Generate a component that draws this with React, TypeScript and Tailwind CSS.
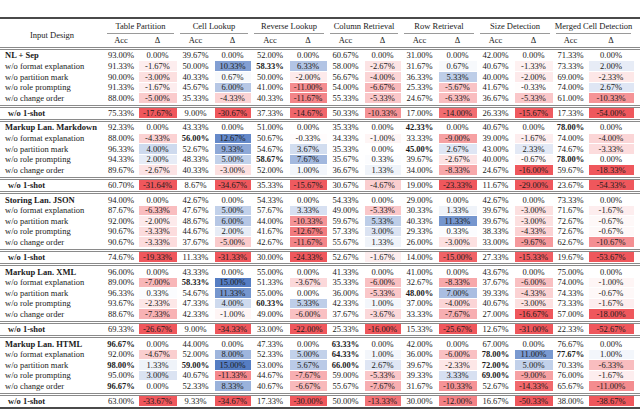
import React from "react";

const WC = [
  "w-[34px]", "w-[39px]", "w-[37px]", "w-[37px]", "w-[38px]", "w-[38px]", "w-[37px]",
  "w-[37px]", "w-[37px]", "w-[39px]", "w-[37px]", "w-[39px]", "w-[35px]", "w-[46px]",
];
const GW = ["w-[73px]", "w-[74px]", "w-[76px]", "w-[74px]", "w-[76px]", "w-[76px]", "w-[81px]"];
const GN = [
  "Table Partition", "Cell Lookup", "Reverse Lookup", "Column Retrieval",
  "Row Retrieval", "Size Detection", "Merged Cell Detection",
];

type Group = { name: string; rows: string[][] };

const SUB = [
  "w/o format explanation",
  "w/o partition mark",
  "w/o role prompting",
  "w/o change order",
];

const groups: Group[] = [
  {
    name: "NL + Sep",
    rows: [
      ["93.00", "0.00", "39.67", "0.00", "52.00", "0.00", "60.67", "0.00", "31.00", "0.00", "42.00", "0.00", "71.33", "0.00"],
      ["91.33", "-1.67", "50.00", "10.33", "*58.33", "6.33", "58.00", "-2.67", "31.67", "0.67", "40.67", "-1.33", "73.33", "2.00"],
      ["90.00", "-3.00", "40.33", "0.67", "50.00", "-2.00", "56.67", "-4.00", "36.33", "5.33", "40.00", "-2.00", "69.00", "-2.33"],
      ["91.33", "-1.67", "45.67", "6.00", "41.00", "-11.00", "54.00", "-6.67", "25.33", "-5.67", "41.67", "-0.33", "74.00", "2.67"],
      ["88.00", "-5.00", "35.33", "-4.33", "40.33", "-11.67", "55.33", "-5.33", "24.67", "-6.33", "36.67", "-5.33", "61.00", "-10.33"],
      ["75.33", "-17.67", "9.00", "-30.67", "37.33", "-14.67", "50.33", "-10.33", "17.00", "-14.00", "26.33", "-15.67", "17.33", "-54.00"],
    ],
  },
  {
    name: "Markup Lan. Markdown",
    rows: [
      ["92.33", "0.00", "43.33", "0.00", "51.00", "0.00", "35.33", "0.00", "*42.33", "0.00", "40.67", "0.00", "*78.00", "0.00"],
      ["88.00", "-4.33", "*56.00", "12.67", "50.67", "-0.33", "34.33", "-1.00", "33.33", "-9.00", "39.00", "-1.67", "74.00", "-4.00"],
      ["96.33", "4.00", "52.67", "9.33", "54.67", "3.67", "35.33", "0.00", "*45.00", "2.67", "43.00", "2.33", "74.67", "-3.33"],
      ["94.33", "2.00", "48.33", "5.00", "*58.67", "7.67", "35.67", "0.33", "39.67", "-2.67", "40.00", "-0.67", "*78.00", "0.00"],
      ["89.67", "-2.67", "40.33", "-3.00", "52.00", "1.00", "36.67", "1.33", "34.00", "-8.33", "24.67", "-16.00", "59.67", "-18.33"],
      ["60.70", "-31.64", "8.67", "-34.67", "35.33", "-15.67", "30.67", "-4.67", "19.00", "-23.33", "11.67", "-29.00", "23.67", "-54.33"],
    ],
  },
  {
    name: "Storing Lan. JSON",
    rows: [
      ["94.00", "0.00", "42.67", "0.00", "54.33", "0.00", "54.33", "0.00", "29.00", "0.00", "42.67", "0.00", "73.33", "0.00"],
      ["87.67", "-6.33", "47.67", "5.00", "57.67", "3.33", "49.00", "-5.33", "30.33", "1.33", "39.67", "-3.00", "71.67", "-1.67"],
      ["92.00", "-2.00", "48.67", "6.00", "44.00", "-10.33", "59.67", "5.33", "40.33", "11.33", "39.67", "-3.00", "72.67", "-0.67"],
      ["90.67", "-3.33", "44.67", "2.00", "41.67", "-12.67", "57.33", "3.00", "29.33", "0.33", "38.33", "-4.33", "72.67", "-0.67"],
      ["90.67", "-3.33", "37.67", "-5.00", "42.67", "-11.67", "55.67", "1.33", "26.00", "-3.00", "33.00", "-9.67", "62.67", "-10.67"],
      ["74.67", "-19.33", "11.33", "-31.33", "30.00", "-24.33", "52.67", "-1.67", "14.00", "-15.00", "27.33", "-15.33", "19.67", "-53.67"],
    ],
  },
  {
    name: "Markup Lan. XML",
    rows: [
      ["96.00", "0.00", "43.33", "0.00", "55.00", "0.00", "41.33", "0.00", "41.00", "0.00", "43.67", "0.00", "75.00", "0.00"],
      ["89.00", "-7.00", "*58.33", "15.00", "51.33", "-3.67", "35.33", "-6.00", "32.67", "-8.33", "37.67", "-6.00", "74.00", "-1.00"],
      ["96.33", "0.33", "54.67", "11.33", "55.00", "0.00", "36.00", "-5.33", "*48.00", "7.00", "39.33", "-4.33", "74.33", "-0.67"],
      ["93.67", "-2.33", "47.33", "4.00", "*60.33", "5.33", "42.33", "1.00", "37.00", "-4.00", "40.67", "-3.00", "73.33", "-1.67"],
      ["88.67", "-7.33", "42.33", "-1.00", "49.00", "-6.00", "37.67", "-3.67", "33.33", "-7.67", "27.00", "-16.67", "57.00", "-18.00"],
      ["69.33", "-26.67", "9.00", "-34.33", "33.00", "-22.00", "25.33", "-16.00", "15.33", "-25.67", "12.67", "-31.00", "22.33", "-52.67"],
    ],
  },
  {
    name: "Markup Lan. HTML",
    rows: [
      ["*96.67", "0.00", "44.00", "0.00", "47.33", "0.00", "*63.33", "0.00", "42.00", "0.00", "67.00", "0.00", "76.67", "0.00"],
      ["92.00", "-4.67", "52.00", "8.00", "52.33", "5.00", "*64.33", "1.00", "36.00", "-6.00", "*78.00", "11.00", "*77.67", "1.00"],
      ["*98.00", "1.33", "*59.00", "15.00", "53.00", "5.67", "*66.00", "2.67", "39.67", "-2.33", "*72.00", "5.00", "70.33", "-6.33"],
      ["95.00", "3.00", "40.67", "-11.33", "44.67", "-7.67", "59.00", "-5.33", "39.33", "3.33", "*69.00", "-9.00", "76.00", "-1.67"],
      ["*96.67", "0.00", "52.33", "8.33", "40.67", "-6.67", "55.67", "-7.67", "31.67", "-10.33", "52.67", "-14.33", "65.67", "-11.00"],
      ["63.00", "-33.67", "9.33", "-34.67", "17.33", "-30.00", "50.00", "-13.33", "30.00", "-12.00", "16.67", "-50.33", "38.00", "-38.67"],
    ],
  },
];

function color(s: string): string {
  const v = parseFloat(s);
  if (v === 0) return "transparent";
  if (v > 0) {
    const t = Math.min(v / 14, 1);
    const r = Math.round(255 - (255 - 85) * t);
    const g = Math.round(255 - (255 - 125) * t);
    const b = Math.round(255 - (255 - 195) * t);
    return `rgb(${r},${g},${b})`;
  }
  const t = Math.min(-v / 16, 1);
  const r = Math.round(255 - (255 - 239) * t);
  const g = Math.round(255 - (255 - 87) * t);
  const b = Math.round(255 - (255 - 92) * t);
  return `rgb(${r},${g},${b})`;
}

function Row({ label, vals, kind }: { label: string; vals: string[]; kind: "head" | "sub" | "shot" }) {
  const labelCls =
    kind === "head"
      ? "w-[104px] pl-[5px] font-bold whitespace-nowrap"
      : kind === "shot"
      ? "w-[104px] pl-[8px] font-bold whitespace-nowrap"
      : "w-[104px] pl-[5px] whitespace-nowrap";
  return (
    <div className={kind === "shot" ? "flex h-[11px] items-center" : "flex h-[10.6px] items-center"}>
      <div className={labelCls}>{label}</div>
      {vals.map((v, i) => {
        if (i % 2 === 0) {
          const bold = v.startsWith("*");
          const t = bold ? v.slice(1) : v;
          return (
            <div key={i} className={WC[i] + " text-center whitespace-nowrap" + (bold ? " font-bold" : "")}>
              {t}%
            </div>
          );
        }
        return (
          <div key={i} className={WC[i] + " h-full px-[0.5px] py-[0.5px]"}>
            <div
              className="flex h-full items-center justify-center whitespace-nowrap"
              style={{ background: color(v) }}
            >
              {v}%
            </div>
          </div>
        );
      })}
    </div>
  );
}

function DoubleRule() {
  return <div className="h-[3px] border-y border-[#8a8a8a]" />;
}

export default function App() {
  return (
    <div className="w-[640px] h-[409px] overflow-hidden bg-white font-['Liberation_Serif',serif] text-[8.5px] leading-none text-[#1a1a1a]">
      <div className="h-[17px]" />
      <div className="h-[2px] bg-[#4a4a4a]" />
      <div className="flex">
        <div className="flex w-[104px] items-center justify-center pt-[5px]">Input Design</div>
        <div className="flex flex-col">
          <div className="flex h-[13.5px] items-center">
            {GN.map((g, i) => (
              <div key={i} className={GW[i] + " text-center whitespace-nowrap"}>
                {g}
              </div>
            ))}
          </div>
          <div className="flex h-[1px]">
            {GW.map((w, i) => (
              <div key={i} className={w + " px-[3px]"}>
                <div className="h-full bg-[#9a9a9a]" />
              </div>
            ))}
          </div>
          <div className="flex h-[13.5px] items-center">
            {WC.map((w, i) => (
              <div key={i} className={w + " text-center"}>
                {i % 2 === 0 ? "Acc" : "Δ"}
              </div>
            ))}
          </div>
        </div>
      </div>
      <DoubleRule />
      <div className="h-[0.4px]" />
      {groups.map((g, gi) => (
        <div key={gi}>
          <Row label={g.name} vals={g.rows[0]} kind="head" />
          {SUB.map((s, si) => (
            <Row key={si} label={s} vals={g.rows[si + 1]} kind="sub" />
          ))}
          <div className="h-[1.2px]" />
          <DoubleRule />
          <Row label="w/o 1-shot" vals={g.rows[5]} kind="shot" />
          {gi < groups.length - 1 ? (
            <>
              <div className="h-[0.7px]" />
              <DoubleRule />
              <div className="h-[0.2px]" />
            </>
          ) : (
            <div className="h-[2px] bg-[#4a4a4a]" />
          )}
        </div>
      ))}
    </div>
  );
}
